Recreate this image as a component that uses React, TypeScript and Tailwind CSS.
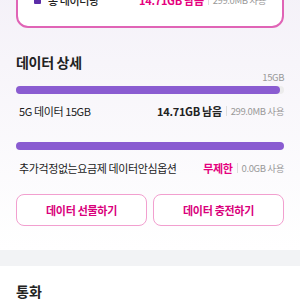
export default function App() {
  const font = { fontFamily: '"Noto Sans CJK KR", "Noto Sans", sans-serif' };
  return (
    <div className="w-[300px] h-[300px] overflow-hidden bg-white text-[#222] whitespace-nowrap" style={font}>
      <div className="bg-gradient-to-b from-[#f4f1f8] to-white px-4 pb-6">
        {/* 총 데이터 카드 */}
        <div className="-mt-[12px] rounded-[12px] border-2 border-[#e064b6] bg-white px-4 pb-4">
          <div className="flex h-5 items-center">
            <span className="mr-[7px] h-[8px] w-[7px] shrink-0 rounded-[1px] bg-[#5b2ca8]" />
            <span className="text-[11px] font-medium tracking-[-0.4px]">총 데이터량</span>
            <span className="ml-auto text-[11px] font-bold tracking-[-0.3px] text-[#e5007e]">14.71GB 남음</span>
            <span className="mx-[4px] h-[10px] w-px shrink-0 bg-[#ddd]" />
            <span className="text-[9.5px] tracking-[-0.4px] text-[#999]">299.0MB 사용</span>
          </div>
        </div>

        <h2 className="mt-[24px] text-[14px] font-bold leading-5 tracking-[-0.3px]">데이터 상세</h2>

        <div className="-mt-[3px] text-right text-[9.5px] leading-4 tracking-[-0.4px] text-[#999]">15GB</div>
        <div className="mt-[1px] h-[8px] rounded-full bg-[#ececec]">
          <div className="h-full w-[98.5%] rounded-full bg-[#8a5cd1]" />
        </div>
        <div className="mt-[9px] flex h-4 items-center pl-[3px]">
          <span className="text-[11px] tracking-[-0.4px]">5G 데이터 15GB</span>
          <span className="ml-auto text-[11px] font-bold tracking-[-0.3px]">14.71GB 남음</span>
          <span className="mx-[4px] h-[10px] w-px shrink-0 bg-[#ddd]" />
          <span className="text-[9.5px] tracking-[-0.4px] text-[#999]">299.0MB 사용</span>
        </div>

        <div className="mt-[23px] h-[8px] rounded-full bg-[#8a5cd1]" />
        <div className="mt-[10px] flex h-4 items-center pl-[3px]">
          <span className="text-[11px] tracking-[-0.4px]">추가걱정없는요금제 데이터안심옵션</span>
          <span className="ml-auto text-[11px] font-bold tracking-[-0.3px] text-[#e5007e]">무제한</span>
          <span className="mx-[4px] h-[10px] w-px shrink-0 bg-[#ddd]" />
          <span className="text-[9.5px] tracking-[-0.4px] text-[#999]">0.0GB 사용</span>
        </div>

        <div className="mt-[18px] grid grid-cols-2 gap-[6px]">
          <button className="h-[32px] rounded-[8px] border border-[#f29fcf] bg-white text-[11px] font-bold tracking-[-0.3px] text-[#d9007b]">
            데이터 선물하기
          </button>
          <button className="h-[32px] rounded-[8px] border border-[#f29fcf] bg-white text-[11px] font-bold tracking-[-0.3px] text-[#d9007b]">
            데이터 충전하기
          </button>
        </div>
      </div>

      <div className="h-4 bg-[#f2f3f5]" />

      <div className="px-4 pt-[15px]">
        <h2 className="text-[14px] font-bold leading-5">통화</h2>
      </div>
    </div>
  );
}
